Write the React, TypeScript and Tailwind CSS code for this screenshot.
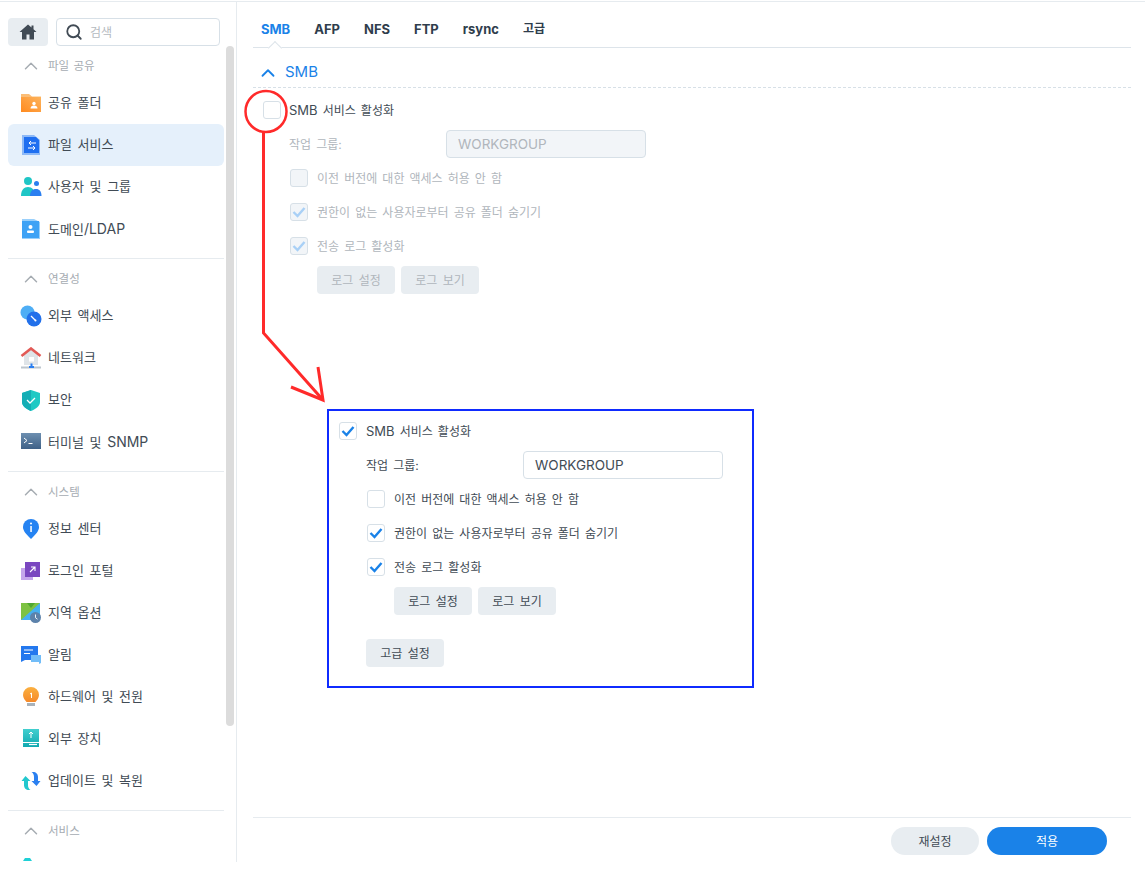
import React from 'react';
import { ChevronUp, Search } from 'lucide-react';

const FONT = "font-['Inter','Noto_Sans_CJK_KR','Noto_Sans',sans-serif]";

// --- sidebar icons, all on a 22x22 grid
const IconFolder = () => (
  <svg width="22" height="22" viewBox="0 0 22 22">
    <defs><linearGradient id="fo" x1="0" y1="1" x2="1" y2="0"><stop offset="0" stopColor="#ff8a1f" /><stop offset="1" stopColor="#fdb35c" /></linearGradient></defs>
    <path d="M1 2h8l3 2.500h9V20H1z" fill="#fbbd76" />
    <rect x="1" y="5" width="20" height="15" fill="url(#fo)" />
    <circle cx="14" cy="11.500" r="1.700" fill="#fff" />
    <path d="M10.500 16.500c0-2 1.500-3 3.500-3s3.500 1 3.500 3z" fill="#fff" />
  </svg>
);
const IconFileService = () => (
  <svg width="22" height="22" viewBox="0 0 22 22">
    <path d="M2 1h12l6 5v15H2z" fill="#8db9f7" />
    <path d="M4 3h12l3 3v13H4z" fill="#1f6ff0" />
    <path d="M8 9H15M8 9l2-2M8 9l2 2M14 14H7M14 14l-2-2M14 14l-2 2" transform="translate(1 0)" stroke="#fff" strokeWidth="1" fill="none" />
  </svg>
);
const IconUsers = () => (
  <svg width="22" height="22" viewBox="0 0 22 22">
    <circle cx="8" cy="5" r="4" fill="#1fc6c6" />
    <path d="M1 20c0-6 3-9 7-9s7 3 7 9z" fill="#1fc6c6" />
    <circle cx="16.500" cy="7.500" r="2.500" fill="#2b7ff0" />
    <path d="M10 20c0-4.500 2.500-7 6-7s5.500 2.500 5.500 7z" fill="#2b7ff0" />
  </svg>
);
const IconDomain = () => (
  <svg width="22" height="22" viewBox="0 0 22 22">
    <path d="M2 1h12l6 3v17H2z" fill="#9ad0fb" />
    <rect x="2" y="3" width="17" height="17" fill="#3ea2f5" />
    <circle cx="10.500" cy="9" r="2" fill="#fff" />
    <rect x="7" y="12.500" width="7" height="2.500" rx="1" fill="#fff" />
  </svg>
);
const IconExternal = () => (
  <svg width="22" height="22" viewBox="0 0 22 22">
    <circle cx="7.500" cy="7.500" r="7" fill="#4eaef5" />
    <circle cx="14" cy="14" r="7.500" fill="#2270ea" />
    <path d="M11 11l4.500 4.500" stroke="#fff" strokeWidth="1.300" />
    <circle cx="15.500" cy="15.500" r="1" fill="#fff" />
  </svg>
);
const IconNetwork = () => (
  <svg width="22" height="22" viewBox="0 0 22 22">
    <path d="M4 8l7-6 7 6v10H4z" fill="#dfe4e8" />
    <path d="M1.500 9L11 1.500 20.500 9" stroke="#e25a56" strokeWidth="2.600" fill="none" />
    <rect x="9" y="10" width="5" height="4.500" fill="#fff" />
    <rect x="1" y="19.500" width="20" height="2" fill="#bcc5cd" />
    <path d="M11.500 16.500v3M9 20h5" stroke="#2b7ff0" strokeWidth="2" />
  </svg>
);
const IconShield = () => (
  <svg width="22" height="22" viewBox="0 0 22 22">
    <path d="M11 1l9 3v9c0 4-4 7-9 9-5-2-9-5-9-9V4z" fill="#1ec9c4" />
    <path d="M2 4l9-3v21c-5-2-9-5-9-9z" fill="#14aeb5" />
    <path d="M7 11l3 3 5-5" stroke="#fff" strokeWidth="1.300" fill="none" />
  </svg>
);
const IconTerminal = () => (
  <svg width="22" height="22" viewBox="0 0 22 22">
    <defs><linearGradient id="te" x1="0" y1="0" x2="0" y2="1"><stop offset="0" stopColor="#6d8fb0" /><stop offset="1" stopColor="#3f6187" /></linearGradient></defs>
    <rect x="1" y="2" width="20" height="16" fill="url(#te)" />
    <path d="M4 7l3 2.500-3 2.500M8.500 12.500h4" stroke="#fff" strokeWidth="1" fill="none" />
  </svg>
);
const IconInfo = () => (
  <svg width="22" height="22" viewBox="0 0 22 22">
    <path d="M11 21C6 16 3 13 3 9a8 8 0 0 1 16 0c0 4-3 7-8 12z" fill="#2583f2" />
    <circle cx="11" cy="5.500" r="1" fill="#fff" />
    <rect x="10.300" y="8" width="1.500" height="6" fill="#fff" />
  </svg>
);
const IconLogin = () => (
  <svg width="22" height="22" viewBox="0 0 22 22">
    <rect x="1" y="8" width="12" height="12" fill="#c5a6ec" />
    <rect x="5" y="2" width="15" height="15" fill="#7a47c0" />
    <path d="M10 12l5-5M11 7h4v4" stroke="#fff" strokeWidth="1.100" fill="none" />
  </svg>
);
const IconRegion = () => (
  <svg width="22" height="22" viewBox="0 0 22 22">
    <rect x="1" y="1" width="19" height="17" fill="#46b0f0" />
    <path d="M1 1h19L1 18z" fill="#7dc242" />
    <path d="M7 1h8l-4 5z" fill="#4fa830" />
    <circle cx="15.500" cy="15.500" r="5.500" fill="#5c82ab" />
    <path d="M15.500 12.500v3.200l2 1.500" stroke="#fff" strokeWidth="0.900" fill="none" />
  </svg>
);
const IconNotify = () => (
  <svg width="22" height="22" viewBox="0 0 22 22">
    <path d="M1 2h17v14H5l-4 2z" fill="#2378ee" />
    <path d="M4 6h9M4 9.500h6" stroke="#fff" strokeWidth="1" />
    <path d="M11 11h10v8l-2 1v-2h-8z" fill="#72bdf8" />
  </svg>
);
const IconBulb = () => (
  <svg width="22" height="22" viewBox="0 0 22 22">
    <defs><linearGradient id="bu" x1="0" y1="0" x2="0" y2="1"><stop offset="0" stopColor="#fbb040" /><stop offset="1" stopColor="#f58a2a" /></linearGradient></defs>
    <path d="M11 1a8 8 0 0 1 8 8c0 3-2 5-3.500 7h-9C5 14 3 12 3 9a8 8 0 0 1 8-8z" fill="url(#bu)" />
    <rect x="7" y="17" width="8" height="3" fill="#a9b2ba" />
    <path d="M10 8l1.500-1v5" stroke="#fff" strokeWidth="1" fill="none" />
  </svg>
);
const IconDevice = () => (
  <svg width="22" height="22" viewBox="0 0 22 22">
    <defs><linearGradient id="de" x1="0" y1="0" x2="0" y2="1"><stop offset="0" stopColor="#42cfcf" /><stop offset="1" stopColor="#10a9b0" /></linearGradient></defs>
    <rect x="3" y="1" width="16" height="18" fill="url(#de)" />
    <path d="M11 10V4M9 6l2-2 2 2" stroke="#fff" strokeWidth="1" fill="none" />
    <path d="M3 14.500h16" stroke="#fff" strokeWidth="1" />
    <path d="M9 16.500h8" stroke="#fff" strokeWidth="1.200" />
  </svg>
);
const IconUpdate = () => (
  <svg width="22" height="22" viewBox="0 0 22 22">
    <path d="M5.500 6L1.500 11h2.500v4c0 3 2 5 5 5h1.500c-1.500-1-2.500-2.500-2.500-5v-4h2.500z" fill="#22c8ce" />
    <path d="M16.500 16l4-5H18V7c0-3-2-5-5-5h-1.500c1.500 1 2.500 2.500 2.500 5v4h-2.500z" fill="#2b80f0" />
  </svg>
);
// only its top shows above the fold of the sidebar
const IconCutOff = () => (
  <svg width="22" height="22" viewBox="0 0 22 22">
    <path d="M5 1h5l2 3H3z" fill="#1fd0d6" />
  </svg>
);

const SECTIONS = [
  {
    title: '파일 공유',
    items: [
      { label: '공유 폴더', icon: <IconFolder /> },
      { label: '파일 서비스', icon: <IconFileService />, active: true },
      { label: '사용자 및 그룹', icon: <IconUsers /> },
      { label: '도메인/LDAP', icon: <IconDomain /> },
    ],
  },
  {
    title: '연결성',
    items: [
      { label: '외부 액세스', icon: <IconExternal /> },
      { label: '네트워크', icon: <IconNetwork /> },
      { label: '보안', icon: <IconShield /> },
      { label: '터미널 및 SNMP', icon: <IconTerminal /> },
    ],
  },
  {
    title: '시스템',
    items: [
      { label: '정보 센터', icon: <IconInfo /> },
      { label: '로그인 포털', icon: <IconLogin /> },
      { label: '지역 옵션', icon: <IconRegion /> },
      { label: '알림', icon: <IconNotify /> },
      { label: '하드웨어 및 전원', icon: <IconBulb /> },
      { label: '외부 장치', icon: <IconDevice /> },
      { label: '업데이트 및 복원', icon: <IconUpdate /> },
    ],
  },
  {
    title: '서비스',
    items: [{ label: '', icon: <IconCutOff /> }],
  },
];

// latin runs are set a little larger than the hangul around them
const Mixed = ({ text }: { text: string }) => (
  <>
    {text.split(/([A-Za-z/]+)/).map((part, i) =>
      i % 2 ? <span key={i} className="text-[14px]">{part}</span> : part
    )}
  </>
);

const Sidebar = () => (
  <aside className="relative w-[237px] shrink-0 border-r border-[#e6ebef] flex flex-col overflow-hidden">
    <div className="flex gap-2 pl-2 pr-4 pt-4 shrink-0">
      <button className="w-10 h-7 rounded bg-[#e8edf1] flex items-center justify-center">
        <svg width="18" height="16" viewBox="0 0 18 16">
          <path d="M9 0.500L0.500 8H3v7.500h4.500V10.500h3v5H15V8h2.500L14.500 5.300V1.500h-2v2z" fill="#414b55" />
        </svg>
      </button>
      <div className="flex-1 h-7 rounded border border-[#d7e0e7] flex items-center pl-2 gap-[7px] bg-white">
        <Search size={18} strokeWidth={2.4} className="text-[#414b55]" />
        <span className="text-xs pt-[2px] text-[#b4bac0]">검색</span>
      </div>
    </div>
    <div className="flex-1 overflow-hidden">
      {SECTIONS.map((section, i) => (
        <div key={section.title} className="pl-2 pr-3 pt-[10px]">
          <div className="h-5 mb-[6px] flex items-center pl-3 gap-[6px] text-[11.500px] [word-spacing:1px] text-[#a6acb2]">
            <ChevronUp size={22} strokeWidth={1.6} className="text-[#a6acb2]" />
            <span className="pt-[2px]">{section.title}</span>
          </div>
          {section.items.map((item) => (
            <div
              key={item.label}
              className={`h-[42px] flex items-center pl-3 gap-[6px] rounded-md text-[13px] [word-spacing:2px] text-[#414b55] ${item.active ? 'bg-[#e5f0fb]' : ''}`}
            >
              {item.icon}
              <span><Mixed text={item.label} /></span>
            </div>
          ))}
          {i < SECTIONS.length - 1 && <div className="mt-2 h-px bg-[#e6ebef]" />}
        </div>
      ))}
    </div>
    {/* scrollbar thumb */}
    <div className="absolute left-[226px] top-[44px] w-2 h-[680px] rounded bg-[#dcdcdc]" />
  </aside>
);

const Check = ({ disabled }: { disabled?: boolean }) => (
  <svg width="14" height="12" viewBox="0 0 14 12">
    <path d="M1.500 6l4 4 7-8" stroke={disabled ? '#a9d0f6' : '#1a82e8'} strokeWidth="2.400" fill="none" />
  </svg>
);

const Checkbox = ({ checked, disabled, white }: { checked?: boolean; disabled?: boolean; white?: boolean }) => (
  <span
    className={`w-[18px] h-[18px] shrink-0 rounded-[3px] border flex items-center justify-center ${
      disabled && !white ? 'bg-[#f2f5f8] border-[#d7e0e7]' : 'bg-white border-[#d7e0e7]'
    }`}
  >
    {checked && <Check disabled={disabled} />}
  </span>
);

const Btn = ({ label, disabled }: { label: string; disabled?: boolean }) => (
  <button
    className={`w-[78px] h-7 rounded bg-[#e8edf1] text-xs pt-[2px] [word-spacing:2px] ${disabled ? 'text-[#b0b6bc]' : 'text-[#414b55]'}`}
  >
    {label}
  </button>
);

const SmbForm = ({ disabled }: { disabled?: boolean }) => {
  const muted = disabled ? 'text-[#b0b6bc]' : 'text-[#414b55]';
  return (
    <div className="[word-spacing:1.7px]">
      <div className={`h-[34px] flex items-center pl-[10px] text-xs text-[#414b55] ${disabled ? 'gap-2' : 'gap-[9px]'}`}>
        <Checkbox checked={!disabled} white />
        <span className="pt-[2px]"><span className="text-[13px]">SMB</span> 서비스 활성화</span>
      </div>
      <div className={disabled ? 'pl-9' : 'pl-[37px]'}>
        <div className={`h-[34px] flex items-center text-xs ${muted}`}>
          <span className="w-[157px] pt-[2px]">작업 그룹:</span>
          <span
            className={`w-[200px] h-7 rounded border border-[#d7e0e7] flex items-center pl-[11px] pt-[2px] text-[13.500px] ${
              disabled ? 'bg-[#f2f5f8]' : 'bg-white'
            }`}
          >
            WORKGROUP
          </span>
        </div>
        {[
          { label: '이전 버전에 대한 액세스 허용 안 함', checked: false },
          { label: '권한이 없는 사용자로부터 공유 폴더 숨기기', checked: true },
          { label: '전송 로그 활성화', checked: true },
        ].map((row) => (
          <div key={row.label} className={`h-[34px] flex items-center pl-px gap-[9px] text-xs ${muted}`}>
            <Checkbox checked={row.checked} disabled={disabled} />
            <span className="pt-[2px]">{row.label}</span>
          </div>
        ))}
        <div className="h-[34px] flex items-center pl-7 gap-[6px]">
          <Btn label="로그 설정" disabled={disabled} />
          <Btn label="로그 보기" disabled={disabled} />
        </div>
      </div>
    </div>
  );
};

const TABS = ['SMB', 'AFP', 'NFS', 'FTP', 'rsync'];

const Main = () => (
  <main className="flex-1 flex flex-col pl-4 pr-[14px] min-w-0">
    <nav className="h-[46px] shrink-0 border-b border-[#dde4ea] flex items-start pt-[17px] pl-2 gap-6 text-[13px] font-bold text-[#2f3d4c] relative">
      {TABS.map((tab, i) => (
        <span key={tab} className={`h-5 leading-5 ${i === 0 ? 'text-[#1a82e8]' : ''}`}>
          {tab}
        </span>
      ))}
      <span className="h-5 leading-5 text-xs font-semibold">고급</span>
      <span className="absolute left-[17px] -bottom-[6px] w-[10px] h-[10px] rotate-45 bg-white border-l border-t border-[#dde4ea]" />
    </nav>
    <div className="flex-1">
      <div className="h-10 border-b border-dashed border-[#d7e0e7] flex items-center pt-[10px] pl-1 gap-[6px] text-[15px] text-[#1a82e8]">
        <ChevronUp size={22} strokeWidth={2} />
        <span>SMB</span>
      </div>
      <div className="pt-[5px]">
        <SmbForm disabled />
      </div>
    </div>
    <footer className="h-[45px] shrink-0 border-t border-[#e6ebef] flex items-start justify-end gap-2 pt-[9px] pr-6">
      <button className="w-[88px] h-7 pt-[2px] rounded-full bg-[#e8edf1] text-xs text-[#414b55]">재설정</button>
      <button className="w-[120px] h-7 pt-[2px] rounded-full bg-[#1a82e8] text-xs text-white">적용</button>
    </footer>
  </main>
);

export default function App() {
  return (
    <div className={`relative w-[1145px] h-[876px] overflow-hidden bg-white ${FONT}`}>
      <div className="h-[861px] mt-px border-t border-[#e6ebef] flex">
        <Sidebar />
        <Main />
      </div>

      {/* blue call-out box with the enabled form */}
      <div className="absolute left-[327px] top-[409px] w-[427px] h-[279px] border-2 border-[#0f2bff] bg-white pt-[3px]">
        <SmbForm />
        <div className="pl-[37px] pt-[21px]">
          <Btn label="고급 설정" />
        </div>
      </div>

      {/* red annotation */}
      <svg className="absolute left-0 top-0 pointer-events-none" width="1145" height="876" fill="none">
        <circle cx="266" cy="111.500" r="20.500" stroke="#ff2a2a" strokeWidth="2.500" />
        <path d="M263.500 132V333L323 400" stroke="#ff2a2a" strokeWidth="3" />
        <path d="M318 367L323 400L291 387" stroke="#ff2a2a" strokeWidth="3" />
      </svg>
    </div>
  );
}
